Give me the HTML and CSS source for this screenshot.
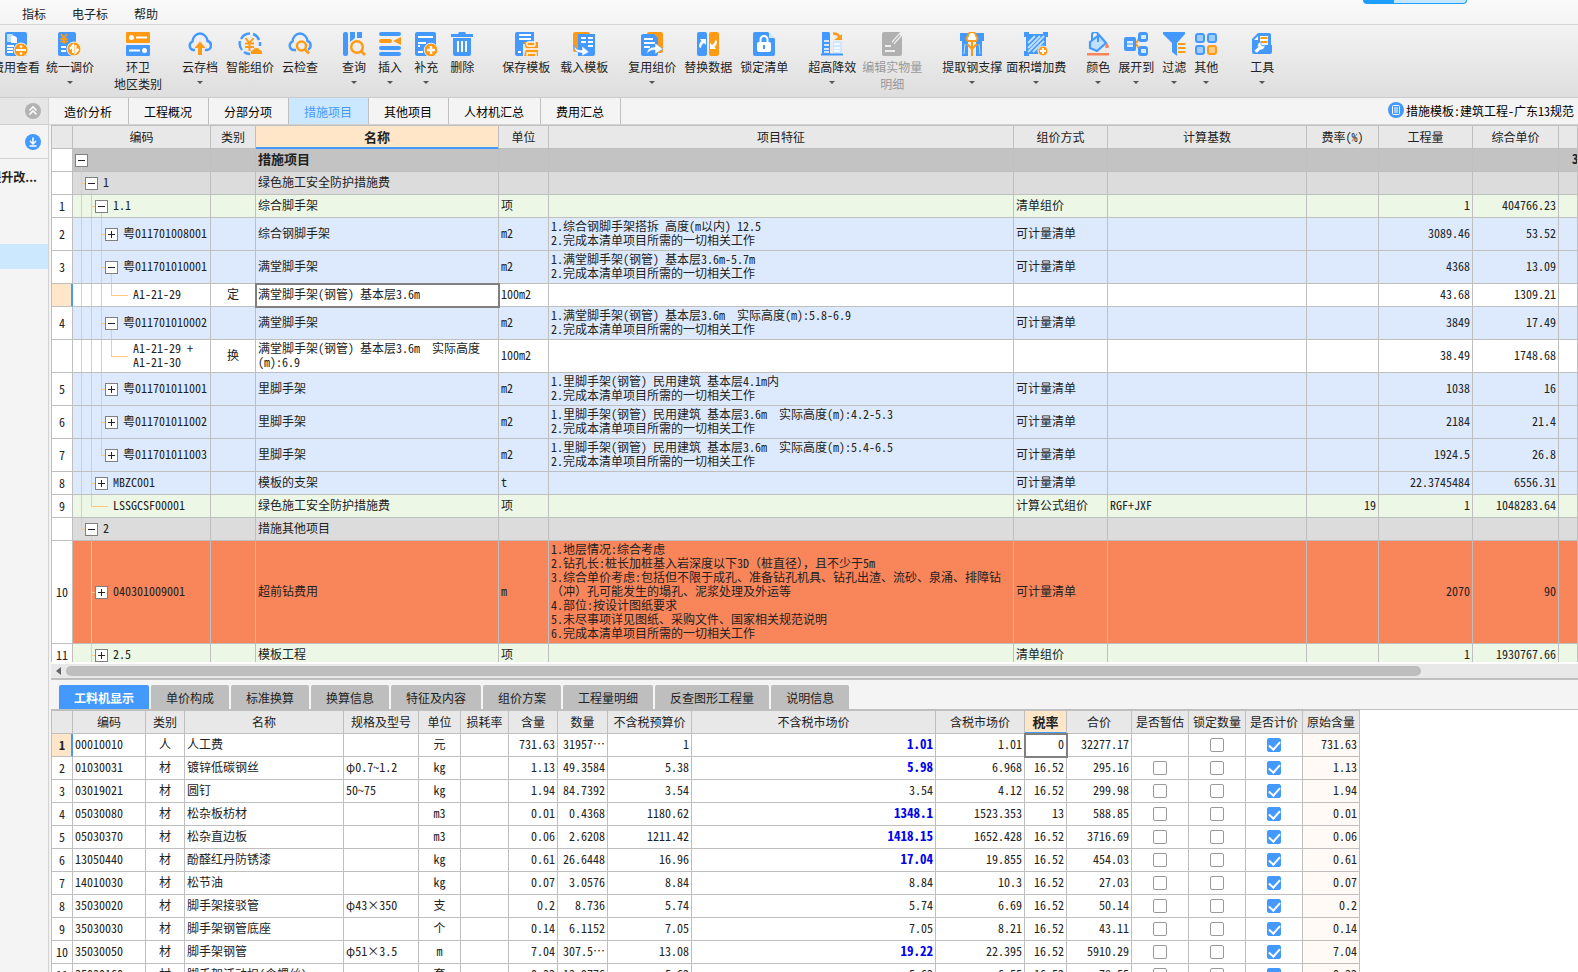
FILE: index.html
```html
<!DOCTYPE html>
<html lang="zh-CN">
<head>
<meta charset="utf-8">
<title>措施项目</title>
<link rel="stylesheet" href="styles.css">
</head>
<body>
<div class="progress" aria-hidden="true"></div>
<nav class="menubar">
  <button type="button">指标</button>
  <button type="button">电子标</button>
  <button type="button">帮助</button>
</nav>
<div class="toolbar">
  <div class="group gap-6">
    <button type="button" class="tool"><svg viewBox="0 0 24 24"><rect x="1" width="22" height="24" rx="2" fill="#49f"/><path d="M3 2h5l2 2v6H3z" fill="#bfe0ff"/><path d="M7 4h4l2 2v5H7z" fill="#fff"/><path d="M3 14h7M3 17h6M3 20h6" stroke="#fff" stroke-width="2"/><circle cx="17" cy="18" r="7" fill="#ff9a14" stroke="#f0f0f0"/><path d="M12 18h10" stroke="#fff" stroke-width="2"/><circle cx="17" cy="14.5" r="1.3" fill="#fff"/><circle cx="17" cy="21.5" r="1.3" fill="#fff"/></svg><span>费用查看</span></button>
    <button type="button" class="tool drop"><svg viewBox="0 0 24 24"><rect x="0" width="18" height="24" rx="2" fill="#49f"/><path d="M3 2l3 4 3-4M6 6v6M2.500 7h7M2.500 9.500h7" stroke="#ff9a14" stroke-width="1.800" fill="none"/><path d="M3 15h5M3 19h5" stroke="#fff" stroke-width="2"/><circle cx="16" cy="17" r="7" fill="#ff9a14" stroke="#f0f0f0"/><path d="M15 21v-7.500l-3 3.500M17.500 13v7.500l3-3.500" stroke="#fff" stroke-width="2" fill="none"/></svg><span>统一调价</span></button>
  </div>
  <div class="group">
    <button type="button" class="tool"><svg viewBox="0 0 24 24"><rect width="24" height="11" rx="1" fill="#ff9a14"/><rect y="13" width="24" height="11" rx="1" fill="#49f"/><path d="M10 5.500h11M3 18.500h11" stroke="#fff" stroke-width="2"/><circle cx="5.500" cy="5.500" r="2.500" fill="#fff"/><circle cx="18.500" cy="18.500" r="2.500" fill="#fff"/></svg><span>环卫<br>地区类别</span></button>
  </div>
  <div class="group">
    <button type="button" class="tool drop"><svg viewBox="0 0 24 24"><path d="M7 18H5a4.500 4.500 0 0 1-.5-8.500C5 5 8 1.500 12 1.500S19 5 19.500 9A4.600 4.600 0 0 1 19 18h-2" fill="none" stroke="#49f" stroke-width="2.400"/><path d="M12 9.500l5.500 6.500H14v7h-4v-7H6.500z" fill="#ff9a14"/></svg><span>云存档</span></button>
    <button type="button" class="tool"><svg viewBox="0 0 24 24"><path d="M21 8A10 10 0 0 0 15 2M12 1.500A10 10 0 0 0 3 7M2 9a10 10 0 0 0 2 9M6 20a10 10 0 0 0 6 2M22 10v4" fill="none" stroke="#49f" stroke-width="2.400"/><path d="M7.500 6l4 5 4-5M11.500 11v8M7 11.500h9M7 15h9" fill="none" stroke="#ff9a14" stroke-width="2"/><path d="M13 22a3 3 0 0 1 2-4 4 4 0 0 1 7 0 3 3 0 0 1 2 4z" fill="#ff9a14"/></svg><span>智能组价</span></button>
    <button type="button" class="tool"><svg viewBox="0 0 24 24"><path d="M8 18H5a4.500 4.500 0 0 1-.5-8.500C5 5 8 1.500 12 1.500S19 5 19.500 9A4.600 4.600 0 0 1 20 17.500" fill="none" stroke="#49f" stroke-width="2.400"/><circle cx="13.500" cy="14" r="4.500" fill="none" stroke="#ff9a14" stroke-width="2.400"/><path d="M17 17.500l4 4" stroke="#ff9a14" stroke-width="2.600"/></svg><span>云检查</span></button>
  </div>
  <div class="group gap-12 after">
    <button type="button" class="tool drop"><svg viewBox="0 0 24 24"><rect x="1" width="5" height="24" rx="2" fill="#49f"/><path d="M8 0h5v6l-5 4zM15 0h5v6h-5z" fill="#49f"/><circle cx="15" cy="15" r="5.800" fill="none" stroke="#ff9a14" stroke-width="2.400"/><path d="M19 19l4 4" stroke="#ff9a14" stroke-width="2.600"/></svg><span>查询</span></button>
    <button type="button" class="tool drop"><svg viewBox="0 0 24 24"><path d="M3 2h18M3 16h18M3 22h18" stroke="#49f" stroke-width="4" stroke-linecap="round"/><path d="M3 9h9" stroke="#ff9a14" stroke-width="4" stroke-linecap="round"/><path d="M15 9l8-4v8z" fill="#ff9a14"/></svg><span>插入</span></button>
    <button type="button" class="tool drop"><svg viewBox="0 0 24 24"><rect x="1" width="21" height="24" rx="2" fill="#49f"/><path d="M4 5h15M4 11h8M4 14h2M4 20h5" stroke="#fff" stroke-width="2"/><circle cx="17" cy="18" r="6.800" fill="#ff9a14" stroke="#f0f0f0"/><path d="M17 14v8M13 18h8" stroke="#fff" stroke-width="2.400"/></svg><span>补充</span></button>
    <button type="button" class="tool"><svg viewBox="0 0 24 24"><path d="M1 2h7l1-2h6l1 2h7v3H1zM3 6h18v16a2 2 0 0 1-2 2H5a2 2 0 0 1-2-2z" fill="#49f"/><path d="M8 9v11M12 9v11M16 9v11" stroke="#fff" stroke-width="2"/></svg><span>删除</span></button>
  </div>
  <div class="group gap-10">
    <button type="button" class="tool"><svg viewBox="0 0 24 24"><path d="M1 2a2 2 0 0 1 2-2h17v12H9v12H3a2 2 0 0 1-2-2z" fill="#49f"/><path d="M5 3h12M5 7h12M4 20h3" stroke="#fff" stroke-width="1.800"/><path d="M10 10h14v14H10l2-7z" fill="#ff9a14"/><rect x="13" y="10" width="8" height="4" rx="1" fill="#ff9a14" stroke="#fff" stroke-width="1.300"/><path d="M13 24v-3h9v3M10 17h14" fill="none" stroke="#fff" stroke-width="1.300"/></svg><span>保存模板</span></button>
    <button type="button" class="tool"><svg viewBox="0 0 24 24"><rect x="1" width="17" height="20" rx="2" fill="#ff9a14"/><path d="M6 2h17v20a2 2 0 0 1-2 2H6z" fill="#49f"/><path d="M9 6h5M16 6h5M9 10h5M16 10h5M16 14h5" stroke="#fff" stroke-width="2"/><path d="M2 13c1 4 4 5 8 5v-4l7 6-7 4v-3C4 21 2 18 2 13z" fill="#fff" stroke="#49f" stroke-width=".6"/></svg><span>载入模板</span></button>
  </div>
  <div class="group">
    <button type="button" class="tool drop"><svg viewBox="0 0 24 24"><rect x="7" width="16" height="21" rx="2" fill="#ff9a14"/><path d="M1 4a2 2 0 0 1 2-2h11l4 4v16a2 2 0 0 1-2 2H3a2 2 0 0 1-2-2z" fill="#49f"/><path d="M4 7h9M4 11h11M4 15h6" stroke="#fff" stroke-width="2"/><path d="M7 22c0-5 3-7 8-7v-4l8 6-8 5v-4c-4 0-6 1-8 4z" fill="#fff" stroke="#49f" stroke-width=".6"/></svg><span>复用组价</span></button>
    <button type="button" class="tool"><svg viewBox="0 0 24 24"><rect x="1" width="10" height="24" rx="2" fill="#49f"/><rect x="13" width="10" height="24" rx="2" fill="#ff9a14"/><path d="M3 15c0-3 1-5 2.500-6L4 7h6v6L8 11c-2 1-3 3-3 5zM21 9c0 3-1 5-2.500 6l1.500 2h-6v-6l2 2c2-1 3-3 3-5z" fill="#fff"/></svg><span>替换数据</span></button>
    <button type="button" class="tool"><svg viewBox="0 0 24 24"><path d="M1 2a2 2 0 0 1 2-2h13l7 7v15a2 2 0 0 1-2 2H3a2 2 0 0 1-2-2z" fill="#49f"/><path d="M17 0l6 6h-6z" fill="#cfe7ff"/><rect x="5" y="10" width="14" height="10" rx="2" fill="#fff"/><path d="M8.500 11V7.500a3.500 3.500 0 0 1 7 0V11" fill="none" stroke="#fff" stroke-width="2"/><path d="M12 13v4" stroke="#49f" stroke-width="2"/></svg><span>锁定清单</span></button>
  </div>
  <div class="group gap-6">
    <button type="button" class="tool drop"><svg viewBox="0 0 24 24"><path d="M2 0h7l1 1v21H2z" fill="#49f"/><path d="M4 9h5M4 13h5M4 17h5M4 20h5" stroke="#fff" stroke-width="1.500"/><path d="M13 9h9v13h-9z" fill="#cfe7ff"/><path d="M14 12h6M14 16h6M14 19h6" stroke="#fff" stroke-width="1.500"/><path d="M1 22.500h22" stroke="#49f" stroke-width="2"/><path d="M13 1.500c4 0 6 1 6 4" stroke="#ff9a14" stroke-width="2.400" fill="none"/><path d="M14 8h8V2z" fill="#ff9a14"/></svg><span>超高降效</span></button>
    <button type="button" class="tool off" disabled><svg viewBox="0 0 24 24"><path d="M2 2a2 2 0 0 1 2-2h16l2 3v19a2 2 0 0 1-2 2H4a2 2 0 0 1-2-2z" fill="#b0b0b0"/><path d="M22 1l-9 10" stroke="#eee" stroke-width="4"/><path d="M20 3l-7 8" stroke="#b0b0b0" stroke-width="1.200"/><path d="M5 14h6M5 19h10" stroke="#eee" stroke-width="2"/></svg><span>编辑实物量<br>明细</span></button>
  </div>
  <div class="group gap-4">
    <button type="button" class="tool drop"><svg viewBox="0 0 24 24"><path d="M0 1h24v8h-2v15h-6V9H8v15H2V9H0z" fill="#49f"/><path d="M5 12l-1 10M19 12l1 10" stroke="#bfe0ff"/><path d="M12 24V9M12 17l-5-5M12 17l5-5" stroke="#ff9a14" stroke-width="2" fill="none"/><path d="M8 9a3 3 0 0 1 0-5 4 4 0 0 1 8 0 3 3 0 0 1 0 5z" fill="#fff" stroke="#ff9a14" stroke-width="2"/></svg><span>提取钢支撑</span></button>
    <button type="button" class="tool drop"><svg viewBox="0 0 24 24"><path d="M2 2h20v20H2zM0 0h5v5H0zM19 0h5v5h-5zM0 19h5v5H0z" fill="#49f"/><path d="M4 11l7-7M4 16L16 4M4 20L20 4M9 20L20 9" stroke="#bfe0ff" stroke-width="1.800"/><circle cx="19" cy="19" r="5" fill="#ff9a14" stroke="#f0f0f0"/><path d="M19 16v6M16 19h6" stroke="#fff" stroke-width="1.800"/></svg><span>面积增加费</span></button>
  </div>
  <div class="group wide">
    <button type="button" class="tool drop"><svg viewBox="0 0 24 24"><path d="M4 10l9-7 7 8-9 8-7-3z" fill="#bfe0ff" stroke="#49f" stroke-width="2.200"/><path d="M6 9V3a3 3 0 0 1 6 0v7" fill="none" stroke="#49f" stroke-width="2"/><path d="M21 11c3 4 2 5 0 5s-3-1 0-5zM1 21h22v2.500H1z" fill="#f9855b"/></svg><span>颜色</span></button>
    <button type="button" class="tool drop"><svg viewBox="0 0 24 24"><path d="M12 11l4-6M12 12l4 6" stroke="#ff9a14" stroke-width="2"/><rect y="5" width="12" height="14" rx="2" fill="#49f"/><rect x="3" y="9" width="6" height="6" fill="#d8ecff"/><path d="M3 12h6" stroke="#49f"/><rect x="14" width="10" height="10" rx="3" fill="#49f"/><rect x="14" y="14" width="10" height="10" rx="3" fill="#49f"/><rect x="17" y="3" width="5" height="4" rx="1" fill="#d8ecff"/><rect x="17" y="17" width="5" height="4" rx="1" fill="#d8ecff"/></svg><span>展开到</span></button>
    <button type="button" class="tool drop"><svg viewBox="0 0 24 24"><path d="M1 0h22v2l-8 9v13l-5-4v-9L1 2z" fill="#49f"/><path d="M15 11h9v11h-9z" fill="#eee"/><path d="M16 12h7.500M16 16h7.500M16 20h7.500" stroke="#ff9a14" stroke-width="2"/></svg><span>过滤</span></button>
    <button type="button" class="tool drop"><svg viewBox="0 0 24 24"><g fill="#9fcdff" stroke="#49f" stroke-width="2"><rect x="2" y="2" width="8" height="8" rx="2"/><rect x="14" y="2" width="8" height="8" rx="2"/><rect x="2" y="14" width="8" height="8" rx="2"/></g><rect x="14" y="14" width="8" height="8" rx="2" fill="#ffcb85" stroke="#ff9a14" stroke-width="2"/></svg><span>其他</span></button>
  </div>
  <div class="group">
    <button type="button" class="tool drop"><svg viewBox="0 0 24 24"><path d="M2 7l6-6h11a2 2 0 0 1 2 2v10h1v7a2 2 0 0 1-2 2H4a2 2 0 0 1-2-2z" fill="#49f"/><path d="M4 8l4-4v4zM10 4h8v9h-8z" fill="#fff"/><path d="M10.500 6h7M10.500 10h7" stroke="#ff9a14" stroke-width="2"/><path d="M4 19l4-4c-1-3 1-5 3-5v3l2 1 2-1c0 3-2 5-5 5l-3 3z" fill="#fff" stroke="#49f" stroke-width=".6"/></svg><span>工具</span></button>
  </div>
</div>

<div class="workspace">
  <aside class="side">
    <div class="side-head"><button type="button" class="round grey" aria-label="收起"><svg viewBox="0 0 16 16"><path d="M4.500 7.500L8 4l3.500 3.500M4.500 11.500L8 8l3.500 3.500" fill="none" stroke="#fff" stroke-width="1.600"/></svg></button></div>
    <div class="side-sub"><button type="button" class="round blue" aria-label="下载"><svg viewBox="0 0 16 16"><path d="M8 3.500v6M5 7l3 3 3-3M4.500 12h7" fill="none" stroke="#fff" stroke-width="1.500"/></svg></button></div>
    <div class="side-title">提升改...</div>
    <div class="side-row"></div>
  </aside>

  <main class="main">
    <div class="top-tabs">
      <button type="button">造价分析</button>
      <button type="button">工程概况</button>
      <button type="button">分部分项</button>
      <button type="button" class="on">措施项目</button>
      <button type="button">其他项目</button>
      <button type="button">人材机汇总</button>
      <button type="button">费用汇总</button>
      <a class="template" href="#"><svg viewBox="0 0 16 16"><circle cx="8" cy="8" r="8" fill="#49f"/><rect x="4.500" y="3.500" width="7" height="9" rx="1" fill="none" stroke="#fff"/><path d="M6 6h4M6 8h4M6 10h4" stroke="#fff"/></svg><span>措施模板:建筑工程-广东13规范</span></a>
    </div>

    <div class="grid-view">
      <table class="grid">
        <colgroup><col class="w21"><col class="w138"><col class="w45"><col class="w243"><col class="w50"><col><col class="w94"><col class="w199"><col class="w72"><col class="w94"><col class="w86"><col class="w19"></colgroup>
        <thead><tr><th></th><th>编码</th><th>类别</th><th class="hot">名称</th><th>单位</th><th>项目特征</th><th>组价方式</th><th>计算基数</th><th>费率(%)</th><th>工程量</th><th>综合单价</th><th></th></tr></thead>
        <tbody>
          <tr class="root"><th></th><td class="g0"><div class="code l0"><button type="button" class="box minus" aria-label="收起"></button></div></td><td></td><td>措施项目</td><td></td><td></td><td></td><td></td><td></td><td></td><td></td><td class="cut">3</td></tr>
          <tr class="part"><th></th><td class="g1"><div class="code l1"><button type="button" class="box minus" aria-label="收起"></button>1</div></td><td></td><td>绿色施工安全防护措施费</td><td></td><td></td><td></td><td></td><td></td><td></td><td></td><td></td></tr>
          <tr class="green"><th>1</th><td class="g2"><div class="code l2"><button type="button" class="box minus" aria-label="收起"></button>1.1</div></td><td></td><td>综合脚手架</td><td>项</td><td></td><td>清单组价</td><td></td><td></td><td class="n">1</td><td class="n">404766.23</td><td></td></tr>
          <tr class="blue two"><th>2</th><td class="g3"><div class="code l3"><button type="button" class="box" aria-label="展开"></button>粤011701008001</div></td><td></td><td>综合钢脚手架</td><td>m2</td><td>1.综合钢脚手架搭拆 高度(m以内) 12.5<br>2.完成本清单项目所需的一切相关工作</td><td>可计量清单</td><td></td><td></td><td class="n">3089.46</td><td class="n">53.52</td><td></td></tr>
          <tr class="blue two"><th>3</th><td class="g3 open3"><div class="code l3"><button type="button" class="box minus" aria-label="收起"></button>粤011701010001</div></td><td></td><td>满堂脚手架</td><td>m2</td><td>1.满堂脚手架(钢管) 基本层3.6m-5.7m<br>2.完成本清单项目所需的一切相关工作</td><td>可计量清单</td><td></td><td></td><td class="n">4368</td><td class="n">13.09</td><td></td></tr>
          <tr class="white"><th class="hot"></th><td class="g4"><div class="code l4">A1-21-29</div></td><td class="c">定</td><td class="sel">满堂脚手架(钢管) 基本层3.6m</td><td>100m2</td><td></td><td></td><td></td><td></td><td class="n">43.68</td><td class="n">1309.21</td><td></td></tr>
          <tr class="blue two"><th>4</th><td class="g3 open3"><div class="code l3"><button type="button" class="box minus" aria-label="收起"></button>粤011701010002</div></td><td></td><td>满堂脚手架</td><td>m2</td><td>1.满堂脚手架(钢管) 基本层3.6m&nbsp; 实际高度(m):5.8-6.9<br>2.完成本清单项目所需的一切相关工作</td><td>可计量清单</td><td></td><td></td><td class="n">3849</td><td class="n">17.49</td><td></td></tr>
          <tr class="white two"><th></th><td class="g4"><div class="code l4">A1-21-29 +<br>A1-21-30</div></td><td class="c">换</td><td>满堂脚手架(钢管) 基本层3.6m&nbsp; 实际高度<br>(m):6.9</td><td>100m2</td><td></td><td></td><td></td><td></td><td class="n">38.49</td><td class="n">1748.68</td><td></td></tr>
          <tr class="blue two"><th>5</th><td class="g3"><div class="code l3"><button type="button" class="box" aria-label="展开"></button>粤011701011001</div></td><td></td><td>里脚手架</td><td>m2</td><td>1.里脚手架(钢管) 民用建筑 基本层4.1m内<br>2.完成本清单项目所需的一切相关工作</td><td>可计量清单</td><td></td><td></td><td class="n">1038</td><td class="n">16</td><td></td></tr>
          <tr class="blue two"><th>6</th><td class="g3"><div class="code l3"><button type="button" class="box" aria-label="展开"></button>粤011701011002</div></td><td></td><td>里脚手架</td><td>m2</td><td>1.里脚手架(钢管) 民用建筑 基本层3.6m&nbsp; 实际高度(m):4.2-5.3<br>2.完成本清单项目所需的一切相关工作</td><td>可计量清单</td><td></td><td></td><td class="n">2184</td><td class="n">21.4</td><td></td></tr>
          <tr class="blue two"><th>7</th><td class="g3end"><div class="code l3"><button type="button" class="box" aria-label="展开"></button>粤011701011003</div></td><td></td><td>里脚手架</td><td>m2</td><td>1.里脚手架(钢管) 民用建筑 基本层3.6m&nbsp; 实际高度(m):5.4-6.5<br>2.完成本清单项目所需的一切相关工作</td><td>可计量清单</td><td></td><td></td><td class="n">1924.5</td><td class="n">26.8</td><td></td></tr>
          <tr class="blue"><th>8</th><td class="g5"><div class="code l2"><button type="button" class="box" aria-label="展开"></button>MBZC001</div></td><td></td><td>模板的支架</td><td>t</td><td></td><td>可计量清单</td><td></td><td></td><td class="n">22.3745484</td><td class="n">6556.31</td><td></td></tr>
          <tr class="green"><th>9</th><td class="g5end"><div class="code l2 leaf">LSSGCSF00001</div></td><td></td><td>绿色施工安全防护措施费</td><td>项</td><td></td><td>计算公式组价</td><td>RGF+JXF</td><td class="n">19</td><td class="n">1</td><td class="n">1048283.64</td><td></td></tr>
          <tr class="part"><th></th><td class="g1end"><div class="code l1"><button type="button" class="box minus" aria-label="收起"></button>2</div></td><td></td><td>措施其他项目</td><td></td><td></td><td></td><td></td><td></td><td></td><td></td><td></td></tr>
          <tr class="orange"><th>10</th><td class="g6"><div class="code l2"><button type="button" class="box" aria-label="展开"></button>040301009001</div></td><td></td><td>超前钻费用</td><td>m</td><td>1.地层情况:综合考虑<br>2.钻孔长:桩长加桩基入岩深度以下3D<span class="full">（</span>桩直径<span class="full">），</span>且不少于5m<br>3.综合单价考虑:包括但不限于成孔、准备钻孔机具、钻孔出渣、流砂、泉涌、排障钻<br><span class="full">（</span>冲<span class="full">）</span>孔可能发生的塌孔、泥浆处理及外运等<br>4.部位:按设计图纸要求<br>5.未尽事项详见图纸、采购文件、国家相关规范说明<br>6.完成本清单项目所需的一切相关工作</td><td>可计量清单</td><td></td><td></td><td class="n">2070</td><td class="n">90</td><td></td></tr>
          <tr class="green"><th>11</th><td class="g6"><div class="code l2"><button type="button" class="box" aria-label="展开"></button>2.5</div></td><td></td><td>模板工程</td><td>项</td><td></td><td>清单组价</td><td></td><td></td><td class="n">1</td><td class="n">1930767.66</td><td></td></tr>
        </tbody>
      </table>
    </div>
    <div class="hscroll"><svg viewBox="0 0 5 8"><path d="M5 0v8L0 4z" fill="#606468"/></svg><div class="thumb"></div></div>

    <section class="detail">
      <div class="detail-tabs">
        <button type="button" class="on">工料机显示</button>
        <button type="button">单价构成</button>
        <button type="button">标准换算</button>
        <button type="button">换算信息</button>
        <button type="button">特征及内容</button>
        <button type="button">组价方案</button>
        <button type="button">工程量明细</button>
        <button type="button">反查图形工程量</button>
        <button type="button">说明信息</button>
      </div>
      <table class="grid sub">
        <colgroup><col class="w21"><col class="w73"><col class="w39"><col class="w159"><col class="w75"><col class="w42"><col class="w48"><col class="w49"><col class="w50"><col class="w84"><col class="w244"><col class="w89"><col class="w42"><col class="w65"><col class="w57"><col class="w57"><col class="w57"><col class="w57"></colgroup>
        <thead><tr><th></th><th>编码</th><th>类别</th><th>名称</th><th>规格及型号</th><th>单位</th><th>损耗率</th><th>含量</th><th>数量</th><th>不含税预算价</th><th>不含税市场价</th><th>含税市场价</th><th class="hot">税率</th><th>合价</th><th>是否暂估</th><th>锁定数量</th><th>是否计价</th><th>原始含量</th></tr></thead>
        <tbody>
          <tr><th class="hot">1</th><td>00010010</td><td class="c">人</td><td>人工费</td><td></td><td class="c">元</td><td></td><td class="n">731.63</td><td class="n">31957⋯</td><td class="n">1</td><td class="n mod">1.01</td><td class="n">1.01</td><td class="n sel">0</td><td class="n">32277.17</td><td></td><td class="c"><input type="checkbox" aria-label="锁定数量"></td><td class="c"><input type="checkbox" aria-label="是否计价" checked></td><td class="n ro">731.63</td></tr>
          <tr><th>2</th><td>01030031</td><td class="c">材</td><td>镀锌低碳钢丝</td><td><span class="full">φ</span>0.7~1.2</td><td class="c">kg</td><td></td><td class="n">1.13</td><td class="n">49.3584</td><td class="n">5.38</td><td class="n mod">5.98</td><td class="n">6.968</td><td class="n">16.52</td><td class="n">295.16</td><td class="c"><input type="checkbox" aria-label="是否暂估"></td><td class="c"><input type="checkbox" aria-label="锁定数量"></td><td class="c"><input type="checkbox" aria-label="是否计价" checked></td><td class="n ro">1.13</td></tr>
          <tr><th>3</th><td>03019021</td><td class="c">材</td><td>圆钉</td><td>50~75</td><td class="c">kg</td><td></td><td class="n">1.94</td><td class="n">84.7392</td><td class="n">3.54</td><td class="n">3.54</td><td class="n">4.12</td><td class="n">16.52</td><td class="n">299.98</td><td class="c"><input type="checkbox" aria-label="是否暂估"></td><td class="c"><input type="checkbox" aria-label="锁定数量"></td><td class="c"><input type="checkbox" aria-label="是否计价" checked></td><td class="n ro">1.94</td></tr>
          <tr><th>4</th><td>05030080</td><td class="c">材</td><td>松杂板枋材</td><td></td><td class="c">m3</td><td></td><td class="n">0.01</td><td class="n">0.4368</td><td class="n">1180.62</td><td class="n mod">1348.1</td><td class="n">1523.353</td><td class="n">13</td><td class="n">588.85</td><td class="c"><input type="checkbox" aria-label="是否暂估"></td><td class="c"><input type="checkbox" aria-label="锁定数量"></td><td class="c"><input type="checkbox" aria-label="是否计价" checked></td><td class="n ro">0.01</td></tr>
          <tr><th>5</th><td>05030370</td><td class="c">材</td><td>松杂直边板</td><td></td><td class="c">m3</td><td></td><td class="n">0.06</td><td class="n">2.6208</td><td class="n">1211.42</td><td class="n mod">1418.15</td><td class="n">1652.428</td><td class="n">16.52</td><td class="n">3716.69</td><td class="c"><input type="checkbox" aria-label="是否暂估"></td><td class="c"><input type="checkbox" aria-label="锁定数量"></td><td class="c"><input type="checkbox" aria-label="是否计价" checked></td><td class="n ro">0.06</td></tr>
          <tr><th>6</th><td>13050440</td><td class="c">材</td><td>酚醛红丹防锈漆</td><td></td><td class="c">kg</td><td></td><td class="n">0.61</td><td class="n">26.6448</td><td class="n">16.96</td><td class="n mod">17.04</td><td class="n">19.855</td><td class="n">16.52</td><td class="n">454.03</td><td class="c"><input type="checkbox" aria-label="是否暂估"></td><td class="c"><input type="checkbox" aria-label="锁定数量"></td><td class="c"><input type="checkbox" aria-label="是否计价" checked></td><td class="n ro">0.61</td></tr>
          <tr><th>7</th><td>14010030</td><td class="c">材</td><td>松节油</td><td></td><td class="c">kg</td><td></td><td class="n">0.07</td><td class="n">3.0576</td><td class="n">8.84</td><td class="n">8.84</td><td class="n">10.3</td><td class="n">16.52</td><td class="n">27.03</td><td class="c"><input type="checkbox" aria-label="是否暂估"></td><td class="c"><input type="checkbox" aria-label="锁定数量"></td><td class="c"><input type="checkbox" aria-label="是否计价" checked></td><td class="n ro">0.07</td></tr>
          <tr><th>8</th><td>35030020</td><td class="c">材</td><td>脚手架接驳管</td><td><span class="full">φ</span>43×350</td><td class="c">支</td><td></td><td class="n">0.2</td><td class="n">8.736</td><td class="n">5.74</td><td class="n">5.74</td><td class="n">6.69</td><td class="n">16.52</td><td class="n">50.14</td><td class="c"><input type="checkbox" aria-label="是否暂估"></td><td class="c"><input type="checkbox" aria-label="锁定数量"></td><td class="c"><input type="checkbox" aria-label="是否计价" checked></td><td class="n ro">0.2</td></tr>
          <tr><th>9</th><td>35030030</td><td class="c">材</td><td>脚手架钢管底座</td><td></td><td class="c">个</td><td></td><td class="n">0.14</td><td class="n">6.1152</td><td class="n">7.05</td><td class="n">7.05</td><td class="n">8.21</td><td class="n">16.52</td><td class="n">43.11</td><td class="c"><input type="checkbox" aria-label="是否暂估"></td><td class="c"><input type="checkbox" aria-label="锁定数量"></td><td class="c"><input type="checkbox" aria-label="是否计价" checked></td><td class="n ro">0.14</td></tr>
          <tr><th>10</th><td>35030050</td><td class="c">材</td><td>脚手架钢管</td><td><span class="full">φ</span>51×3.5</td><td class="c">m</td><td></td><td class="n">7.04</td><td class="n">307.5⋯</td><td class="n">13.08</td><td class="n mod">19.22</td><td class="n">22.395</td><td class="n">16.52</td><td class="n">5910.29</td><td class="c"><input type="checkbox" aria-label="是否暂估"></td><td class="c"><input type="checkbox" aria-label="锁定数量"></td><td class="c"><input type="checkbox" aria-label="是否计价" checked></td><td class="n ro">7.04</td></tr>
          <tr><th>11</th><td>35030160</td><td class="c">材</td><td>脚手架活动扣(含螺丝)</td><td></td><td class="c">套</td><td></td><td class="n">0.32</td><td class="n">13.9776</td><td class="n">5.62</td><td class="n">5.62</td><td class="n">6.55</td><td class="n">16.52</td><td class="n">78.55</td><td class="c"><input type="checkbox" aria-label="是否暂估"></td><td class="c"><input type="checkbox" aria-label="锁定数量"></td><td class="c"><input type="checkbox" aria-label="是否计价" checked></td><td class="n ro">0.32</td></tr>
        </tbody>
      </table>
    </section>
  </main>
</div>
</body>
</html>
```
FILE: styles.css
```css
:root {
  --line: #bfbfbf;
  --blue: #4499ff;
  --hot: #ffe6c8;
  --guide: linear-gradient(#ffc880, #ffc880);
}
* { box-sizing: border-box; }
body {
  margin: 0;
  height: 100vh;
  display: flex;
  flex-direction: column;
  overflow: hidden;
  background: #f4f4f4;
  color: #222;
  font: 12px/17px "Noto Sans CJK SC", sans-serif;
}
button {
  margin: 0;
  padding: 0;
  border: 0;
  background: none;
  color: inherit;
  font: inherit;
  white-space: nowrap;
}
.progress {
  position: absolute;
  top: 0;
  right: 111px;
  width: 104px;
  height: 4px;
  border: 1px solid #1e9fff;
  border-top: 0;
  border-radius: 0 0 4px 4px;
  background: linear-gradient(90deg, #1e9fff 30px, #c4e8ff 30px);
}
.menubar {
  flex: none;
  display: flex;
  align-items: flex-start;
  gap: 26px;
  height: 25px;
  padding: 5px 0 0 22px;
  background: linear-gradient(#fafafa, #f4f4f4);
  border-bottom: 1px solid #d4d4d4;
}

/* toolbar */
.toolbar {
  flex: none;
  display: flex;
  gap: 20px;
  height: 73px;
  padding-top: 7px;
  background: linear-gradient(#f3f3f3, #dedede);
  border-bottom: 1px solid #cbcbcb;
  overflow: hidden;
}
.group { display: flex; flex: none; gap: 8px; align-items: flex-start; }
.group:first-child { margin-left: -8px; }
.gap-4 { gap: 4px; }
.gap-6 { gap: 6px; }
.gap-10 { gap: 10px; }
.gap-12 { gap: 12px; }
.after { margin: 0 8px 0 4px; }
.wide { margin-right: 12px; }
.tool {
  display: flex;
  flex-direction: column;
  align-items: center;
  text-align: center;
}
.tool svg { width: 24px; height: 24px; margin-bottom: 2px; }
.tool.drop::after {
  content: "";
  margin-top: 6px;
  border: 3px solid transparent;
  border-top-color: #555;
}
.tool.off { color: #999; }

/* workspace */
.workspace { flex: 1; min-height: 0; display: flex; }
.side { flex: 0 0 49px; min-width: 0; width: 49px; overflow: hidden; border-right: 1px solid #d2d2d2; }
.side-head, .side-sub {
  display: flex;
  justify-content: flex-end;
  align-items: center;
  padding-right: 7px;
}
.side-head { height: 27px; background: #e6e6e6; border-bottom: 1px solid #cfcfcf; }
.side-sub { height: 34px; border-bottom: 1px solid #d2d2d2; }
.round { width: 16px; height: 16px; border-radius: 50%; }
.round svg { display: block; }
.round.grey { background: #b3b3b3; }
.round.blue { background: var(--blue); }
.side-title {
  display: flex;
  justify-content: flex-end;
  padding: 9px 11px 0 0;
  font-weight: bold;
  white-space: nowrap;
  overflow: hidden;
}
.side-row { height: 25px; margin-top: 59px; background: #cce8ff; }

.main { flex: 1; min-width: 0; display: flex; flex-direction: column; }
.top-tabs {
  flex: none;
  display: flex;
  height: 27px;
  color: #000;
  border-bottom: 1px solid #d2d2d2;
}
.top-tabs button { padding: 0 16px 0 15px; border-right: 1px solid var(--line); }
.top-tabs .on { background: #cce8ff; color: var(--blue); }
.template {
  display: flex;
  align-items: center;
  gap: 2px;
  margin-left: auto;
  padding: 0 4px 2px 0;
  color: #000;
  text-decoration: none;
  font-feature-settings: "hwid";
}
.template svg { width: 16px; height: 16px; }

/* grids */
.grid-view {
  flex: 1;
  min-height: 0;
  margin-left: 2px;
  overflow: hidden;
  background: #fff;
  border-bottom: 2px solid #fff;
}
.grid {
  width: 100%;
  table-layout: fixed;
  border-collapse: separate;
  border-spacing: 0;
  border-top: 1px solid var(--line);
  border-left: 1px solid var(--line);
  line-height: 14px;
  font-feature-settings: "hwid";
}
.grid th, .grid td {
  height: 23px;
  padding: 0 2px 2px;
  border-right: 1px solid var(--line);
  border-bottom: 1px solid var(--line);
  text-align: left;
  font-weight: normal;
  white-space: nowrap;
  overflow: hidden;
}
.grid th { text-align: center; background: #fff; padding: 0; }
.grid thead th { background: #e8e8e8; }
.grid thead .hot {
  background: var(--hot);
  font-size: 13px;
  font-weight: bold;
  border-bottom-color: var(--blue);
  box-shadow: inset 0 -1px var(--blue);
}
.grid tbody .hot {
  background: var(--hot);
  font-weight: bold;
  border-right-color: var(--blue);
  box-shadow: inset -1px 0 var(--blue);
}
.grid .n { text-align: right; }
.grid .c { text-align: center; }
.grid .sel { outline: 2px solid #808080; outline-offset: -1px; }
.grid .cut { padding-left: 13px; }
.full { font-feature-settings: normal; }
.w19 { width: 19px; } .w21 { width: 21px; } .w39 { width: 39px; } .w42 { width: 42px; }
.w45 { width: 45px; } .w48 { width: 48px; } .w49 { width: 49px; } .w50 { width: 50px; }
.w57 { width: 57px; } .w65 { width: 65px; } .w72 { width: 72px; } .w73 { width: 73px; }
.w75 { width: 75px; } .w84 { width: 84px; } .w86 { width: 86px; } .w89 { width: 89px; }
.w94 { width: 94px; } .w138 { width: 138px; } .w159 { width: 159px; } .w199 { width: 199px; }
.w243 { width: 243px; } .w244 { width: 244px; }

.root { background: #c3c3c3; }
.grid .root td { font-size: 13px; font-weight: bold; }
.part { background: #dcdcdc; }
.green { background: #ecf7e6; }
.blue { background: #ddeafe; }
.white { background: #fff; }
.orange { background: #f9855b; }
.grid .two td { height: 33px; }
.grid .orange td { height: 103px; }

/* tree column */
.grid .code { display: flex; align-items: center; gap: 5px; }
.l1 { padding-left: 10px; }
.l2 { padding-left: 20px; }
.l3 { padding-left: 30px; }
.l4 { padding-left: 58px; }
.grid .leaf { padding-left: 38px; }
.box {
  flex: none;
  width: 13px;
  height: 13px;
  margin-top: 2px;
  border: 1px solid #808080;
  background:
    linear-gradient(#222, #222) center / 7px 1px no-repeat,
    linear-gradient(#222, #222) center / 1px 7px no-repeat,
    #fff;
}
.box.minus { background: linear-gradient(#222, #222) center / 7px 1px no-repeat, #fff; }
.grid td[class^="g"] { background-repeat: no-repeat; background-image: var(--guide), var(--guide), var(--guide), var(--guide), var(--guide); }
.grid .g0 { background-position: 8px 100%; background-size: 1px 50%, 0 0, 0 0, 0 0, 0 0; }
.grid .g1 { background-position: 8px 0, 8px 50%, 18px 100%; background-size: 1px 100%, 10px 1px, 1px 50%, 0 0, 0 0; }
.grid .g1end { background-position: 8px 0, 8px 50%, 18px 100%; background-size: 1px 50%, 10px 1px, 1px 50%, 0 0, 0 0; }
.grid .g2 { background-position: 8px 0, 18px 0, 18px 50%, 28px 100%, 0 0; background-size: 1px 100%, 1px 100%, 10px 1px, 1px 50%, 0 0; }
.grid .g3 { background-position: 8px 0, 18px 0, 28px 0, 28px 50%, 38px 100%; background-size: 1px 100%, 1px 100%, 1px 100%, 10px 1px, 0 0; }
.grid .g3.open3 { background-size: 1px 100%, 1px 100%, 1px 100%, 10px 1px, 1px 50%; }
.grid .g3end { background-position: 8px 0, 18px 0, 28px 0, 28px 50%, 0 0; background-size: 1px 100%, 1px 100%, 1px 50%, 10px 1px, 0 0; }
.grid .g4 { background-position: 8px 0, 18px 0, 28px 0, 38px 0, 38px 50%; background-size: 1px 100%, 1px 100%, 1px 100%, 1px 50%, 17px 1px; }
.grid .g5 { background-position: 8px 0, 18px 0, 18px 50%, 0 0, 0 0; background-size: 1px 100%, 1px 100%, 10px 1px, 0 0, 0 0; }
.grid .g5end { background-position: 8px 0, 18px 0, 18px 50%, 0 0, 0 0; background-size: 1px 100%, 1px 50%, 17px 1px, 0 0, 0 0; }
.grid .g6 { background-position: 18px 0, 18px 50%, 0 0, 0 0, 0 0; background-size: 1px 100%, 10px 1px, 0 0, 0 0, 0 0; }

.hscroll {
  flex: none;
  display: flex;
  align-items: center;
  gap: 5px;
  height: 16px;
  margin-left: 2px;
  padding-left: 5px;
  background: #e8e8e8;
  border-bottom: 2px solid var(--line);
}
.hscroll svg { width: 5px; height: 8px; }
.thumb { flex: 0 0 89%; height: 10px; border-radius: 5px; background: #bebebe; }

/* detail pane */
.detail {
  flex: 0 0 292px;
  overflow: hidden;
  margin-left: 2px;
  background: #fff;
}
.detail-tabs {
  display: flex;
  gap: 2px;
  height: 30px;
  padding: 5px 0 0 8px;
  background: #f4f4f4;
  border-bottom: 1px solid var(--line);
}
.detail-tabs button {
  padding: 0 15px;
  background: #bebebe;
  border-radius: 2px 2px 0 0;
}
.detail-tabs .on { background: var(--blue); color: #fff; font-weight: bold; }
.sub { width: 1309px; }
.grid .mod { color: #0000f0; font-size: 13px; font-weight: bold; }
.sub .ro { background: #fffaf5; }
.grid input {
  appearance: none;
  display: block;
  width: 14px;
  height: 14px;
  margin: 2px auto 0;
  border: 1px solid #999;
  border-radius: 2px;
  background: #fff;
}
.grid input:checked {
  display: flex;
  justify-content: center;
  border-color: var(--blue);
  background: var(--blue);
}
.grid input:checked::after {
  content: "";
  width: 5px;
  height: 9px;
  border: solid #fff;
  border-width: 0 2px 2px 0;
  transform: rotate(42deg);
}
```
